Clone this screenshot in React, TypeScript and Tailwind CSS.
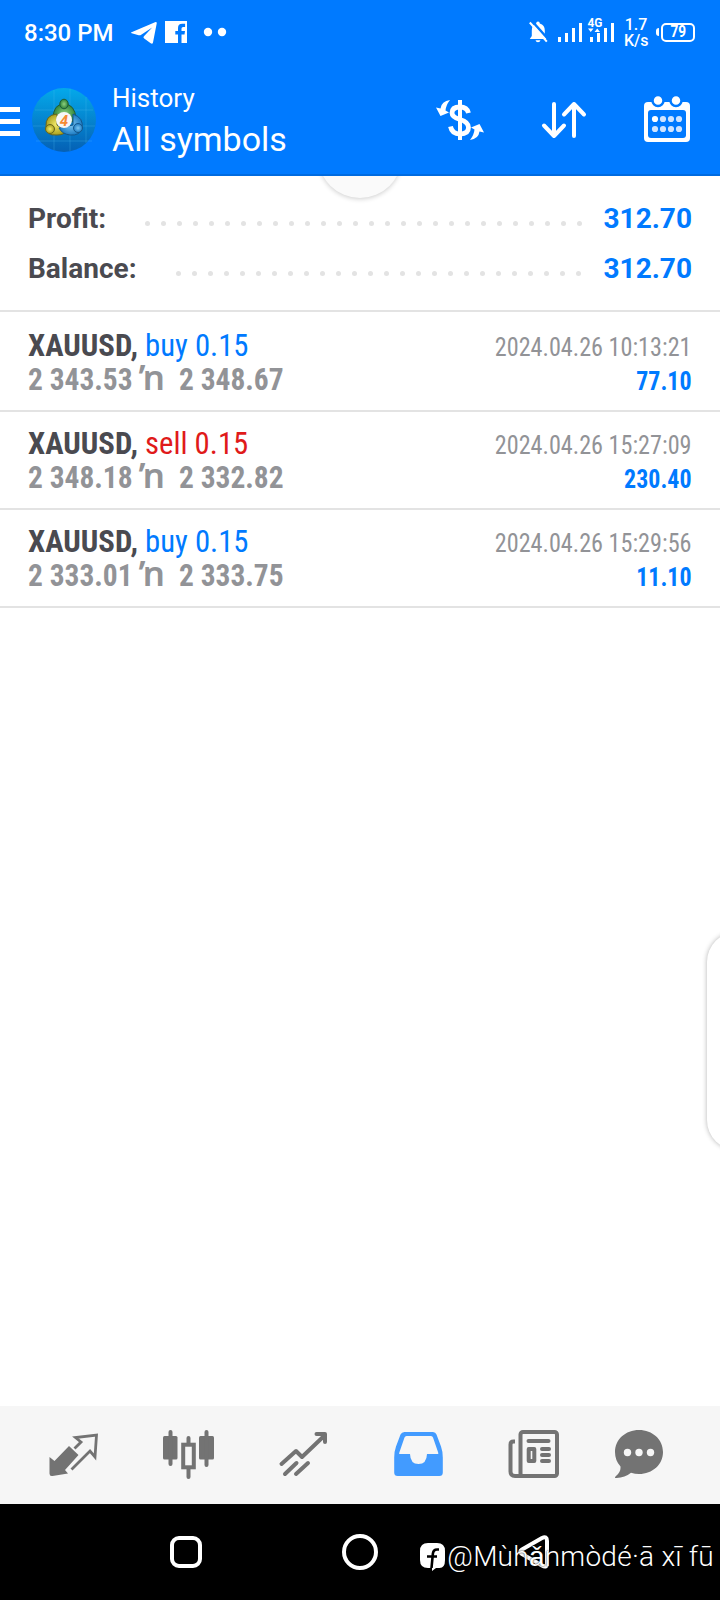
interface Deal {
  symbol: string;
  side: 'buy' | 'sell';
  volume: string;
  open: string;
  close: string;
  time: string;
  profit: string;
}

const deals: Deal[] = [
  { symbol: 'XAUUSD', side: 'buy', volume: '0.15', open: '2 343.53', close: '2 348.67', time: '2024.04.26 10:13:21', profit: '77.10' },
  { symbol: 'XAUUSD', side: 'sell', volume: '0.15', open: '2 348.18', close: '2 332.82', time: '2024.04.26 15:27:09', profit: '230.40' },
  { symbol: 'XAUUSD', side: 'buy', volume: '0.15', open: '2 333.01', close: '2 333.75', time: '2024.04.26 15:29:56', profit: '11.10' },
];

function StatusBar() {
  return (
    <div className="flex h-16 items-center justify-between pl-6 pr-[25px] text-white">
      <div className="flex items-center">
        <span className="w-[107px] pt-px text-2xl font-medium whitespace-nowrap">8:30 PM</span>
        <svg width="96" height="24" viewBox="131 20 96 24" fill="white">
          <path d="M131.5 32.3 155 22.2q2-.8 1.7 1.3L153 42.5q-.5 2-2.300.800l-6.500-4.800q-1.500-1.200 0-2.500l8-8.500-11 7.300q-1.200.8-2.500.4l-7-2q-1.300-.5-.2-.9z" />
          <path d="M165 21h22v22h-5.500v-8.500h3l.5-3.600h-3.500v-2.400q0-1.500 1.600-1.500h2v-3.200h-2.900q-4.200 0-4.200 4.200v2.900h-2.700v3.600h2.700V43H165z" />
          <circle cx="208" cy="32" r="4.200" />
          <circle cx="222" cy="32" r="4.200" />
        </svg>
      </div>
      <div className="flex items-center">
        <svg width="88" height="32" viewBox="528 16 88 32" fill="white">
          <path d="M538 21.500q1.800 0 1.800 2 5 1.500 5 7v5.500l2 3h-17l2-3v-5.500q0-5.500 4.400-7 0-2 1.800-2zM535.500 40.200h5q-.5 2-2.500 2t-2.500-2z" />
          <path d="M531.500 20.500l17 19" stroke="#007aff" strokeWidth="2.500" />
          <path d="M529.800 22.500l17 19.200" stroke="white" strokeWidth="2" />
          <path d="M558 37h3v5h-3zM565 33h3v9h-3zM572 28h3v14h-3zM579 23h3v19h-3z" />
          <path d="M590 37h3v5h-3zM597 33h3v9h-3zM604 28h3v14h-3zM611 23h3v19h-3z" />
          <path d="M588 28.500h5.500l-2.750 3.500zM594.500 32h5.500l-2.750-3.500z" />
          <text x="587.500" y="27" textLength="15" lengthAdjust="spacingAndGlyphs" className="font-[Roboto] text-[12px] font-bold">4G</text>
        </svg>
        <div className="ml-2 w-6 pt-0.5 text-center text-base/4 font-medium">
          <div className="whitespace-nowrap">1.7</div>
          <div className="whitespace-nowrap">K/s</div>
        </div>
        <div className="ml-2 h-2 w-[3px] rounded-l-sm bg-white" />
        <div className="ml-0.5 flex h-[19px] w-[34px] items-center justify-center rounded-[5px] border-2 border-white text-base/4 font-bold">
          <span className="scale-x-85">79</span>
        </div>
      </div>
    </div>
  );
}

function AppLogo() {
  return (
    <svg width="64" height="64" viewBox="0 0 64 64" className="ml-3">
      <defs>
        <linearGradient id="disc" x1="0" y1="0" x2="0" y2="1">
          <stop offset="0" stopColor="#04a9ea" />
          <stop offset="1" stopColor="#0560b4" />
        </linearGradient>
        <radialGradient id="green"><stop stopColor="#8fd07f" /><stop offset="1" stopColor="#2b8137" /></radialGradient>
        <radialGradient id="yellow"><stop stopColor="#f3ea6b" /><stop offset="1" stopColor="#a9a01d" /></radialGradient>
        <radialGradient id="blue"><stop stopColor="#7cc6f1" /><stop offset="1" stopColor="#1d7cc4" /></radialGradient>
      </defs>
      <circle cx="32" cy="32" r="32" fill="url(#disc)" />
      <path d="M22 2v60M38 1v62M54 9v46M3 22h58M1 38h62M4 53h56" stroke="#4fb9ee" strokeOpacity=".28" />
      <path d="M21 31q0-15 11-15t12 15l-4 3H25z" fill="url(#green)" stroke="#1e5c3a" />
      <path d="M25 26q-12 1-11 13 0 9 11 8 7 0 9-4l-9-6z" fill="url(#yellow)" stroke="#67641c" />
      <path d="M41 26q11 4 9 14-2 8-12 7-8-1-11-7l14-3z" fill="url(#blue)" stroke="#14578c" />
      <ellipse cx="32" cy="16" rx="4.200" ry="4.800" fill="url(#green)" stroke="#1e5c3a" />
      <circle cx="18" cy="41" r="4.500" fill="url(#yellow)" stroke="#67641c" />
      <circle cx="46" cy="40" r="4.500" fill="url(#blue)" stroke="#14578c" />
      <circle cx="32" cy="32" r="8" fill="#f7f7f7" />
      <text x="32" y="37.500" textAnchor="middle" fill="#f58a33" className="font-[Roboto] text-[15px] font-bold italic">4</text>
    </svg>
  );
}

function Header() {
  return (
    <div className="flex h-28 items-center border-b-2 border-[#006be0] pt-0.5 text-white">
      <div className="mt-[3px] flex w-5 flex-col gap-[7px]">
        <div className="h-[5px] bg-white" />
        <div className="h-[5px] bg-white" />
        <div className="h-[5px] bg-white" />
      </div>
      <AppLogo />
      <div className="ml-4 flex-1 pb-0.5 whitespace-nowrap">
        <div className="text-[26px]/[40px]">History</div>
        <div className="text-[34px]/[42px]">All symbols</div>
      </div>
      <svg width="256" height="48" viewBox="436 96 256 48" fill="none" stroke="white">
        {/* currency swap */}
        <path d="M460 100v40" strokeWidth="4" />
        <path d="M468.500 113q-1.500-6-8.500-6-8 0-8 6 0 4 8 6.500 8.500 2.500 8.500 8 0 6.500-8.500 6.500-8 0-9.500-7.500" strokeWidth="4.800" />
        <path d="M450 100q-8.500 1-9.500 8.500l-4.500-1 4.500 8.500 8.500-3.500-3.500-2q.5-5.500 4.500-10.500zM470 140q8.500-1 9.500-8.500l4.500 1-4.500-8.500-8.500 3.500 3.500 2q-.5 5.500-4.500 10.500z" fill="white" stroke="none" />
        {/* sort */}
        <path d="M554 104v32M544 125.500l10 10.500 10-10.500M574 136v-32M564 114.500l10-10.500 10 10.500" strokeWidth="4" strokeLinecap="round" strokeLinejoin="round" />
        {/* calendar */}
        <rect x="644" y="102" width="46" height="40" rx="4" fill="white" stroke="none" />
        <rect x="648" y="110" width="38" height="28" rx="3" fill="#007aff" stroke="none" />
        <circle cx="658" cy="100.500" r="5.500" fill="white" stroke="#007aff" strokeWidth="2.500" />
        <circle cx="676" cy="100.500" r="5.500" fill="white" stroke="#007aff" strokeWidth="2.500" />
        <g fill="#cfe4ff" stroke="none">
          <circle cx="655" cy="119" r="3.100" fill="white" />
          <circle cx="663" cy="119" r="3.100" />
          <circle cx="671" cy="119" r="3.100" />
          <circle cx="679" cy="119" r="3.100" />
          <circle cx="655" cy="129" r="3.100" />
          <circle cx="663" cy="129" r="3.100" />
          <circle cx="671" cy="129" r="3.100" />
          <circle cx="679" cy="129" r="3.100" />
        </g>
      </svg>
      <div className="w-7" />
    </div>
  );
}

function SummaryRow({ label, value, dots }: { label: string; value: string; dots: number }) {
  // the leader starts a fixed distance after the label
  return (
    <div className="flex h-[50px] items-center text-[28px] font-bold">
      <span className="text-[#4a4a50]">{label}</span>
      <div className="ml-[39px] flex flex-1 items-center gap-[11px] pt-[9px]">
        {Array.from({ length: dots }, (_, i) => (
          <span key={i} className="size-[5px] shrink-0 rounded-full bg-[#e3e3e3]" />
        ))}
      </div>
      <span className="text-right text-[#007aff]">{value}</span>
    </div>
  );
}

function DealRow({ deal }: { deal: Deal }) {
  return (
    <div className="flex h-[98px] justify-between border-b-2 border-[#e3e3e3] px-7 pt-3.5 font-['Roboto_Condensed',Roboto,sans-serif] font-stretch-condensed">
      <div className="text-[32px]/[34px] font-bold whitespace-nowrap text-[#929397]">
        <div className="origin-left scale-x-96 text-[#4a4a50]">
          {deal.symbol},{' '}
          <span className={deal.side === 'buy' ? 'font-normal text-[#007aff]' : 'font-normal text-[#e01a1a]'}>
            {deal.side} {deal.volume}
          </span>
        </div>
        <div className="flex">
          <span className="w-[111px] origin-left scale-x-92">{deal.open}</span>
          <span className="w-10 font-['Noto_Sans'] text-[35px]/[29px] font-semibold font-stretch-normal">ŉ</span>
          <span className="origin-left scale-x-92">{deal.close}</span>
        </div>
      </div>
      <div className="pt-0.5 text-right text-[26px]/[34px]">
        <div className="origin-right scale-x-93 text-[#929397]">{deal.time}</div>
        <div className="origin-right scale-x-92 font-bold text-[#007aff]">{deal.profit}</div>
      </div>
    </div>
  );
}

function TabBar() {
  return (
    <div className="flex h-[98px] items-center bg-[#f6f6f6] pl-[46px] text-[#737373]">
      <svg width="56" height="56" viewBox="46 1427 56 56" fill="none" className="mr-[59px]">
        <path d="M49.500 1457l5 4 14.500-15 9.500 9-13.500 15 3 3.500-15.500 2.500q-3 .5-3-2.500z" fill="currentColor" />
        <path d="M74.500 1448.500l6.500-6.500-5.500-4.500 21-2.500-1.500 22-5-6-18.500 18.500" stroke="currentColor" strokeWidth="2.800" />
      </svg>
      <svg width="56" height="56" viewBox="161 1427 56 56" fill="currentColor" className="mr-[59px]">
        <rect x="163" y="1436" width="14.500" height="23.500" rx="1.500" />
        <rect x="199" y="1436" width="15" height="23.500" rx="1.500" />
        <path d="M170.500 1432v32M206.500 1432v33M188.500 1438v6M188.500 1468v9" stroke="currentColor" strokeWidth="4" strokeLinecap="round" />
        <rect x="183.200" y="1444.700" width="10.600" height="22.600" fill="none" stroke="currentColor" strokeWidth="4" />
      </svg>
      <svg width="56" height="56" viewBox="276 1427 56 56" fill="none" stroke="currentColor" strokeWidth="4" strokeLinecap="round" strokeLinejoin="round" className="mr-[59px]">
        <path d="M281.500 1464l14.500-13 6 6 22-21M316.500 1434h8.500v8M285 1474l11.500-11M296 1474l12-11" />
      </svg>
      <svg width="56" height="56" viewBox="391 1427 56 56" className="mr-[59px]">
        <path fill="#429bff" fillRule="evenodd" d="M405 1432h28q2.500 0 3.500 2.500l4.500 12q1.800 5 1.800 11v15q0 3.500-3.500 3.500h-41.600q-3.500 0-3.500-3.500v-15q0-6 1.800-11l4.500-12q1.200-2.500 4-2.500zM406.500 1436q-1.500 0-2 1.500l-5 14.500q-.8 2-.1 2h10.600q.3 10 8.500 10t8.500-10h11q.8 0 0-2l-5-14.500q-.5-1.500-2-1.500z" />
      </svg>
      <svg width="56" height="56" viewBox="506 1427 56 56" fill="none" stroke="currentColor" strokeWidth="4" strokeLinecap="round" className="mr-[49px]">
        <rect x="520.500" y="1432" width="36.500" height="44" rx="2.500" />
        <path d="M515 1441.500h-1.500q-3 0-3 3v27q0 4.500 4.500 4.500h8" strokeLinecap="butt" />
        <path d="M528.500 1441h20M542 1449h7M542 1455h7M542 1461h7" />
        <rect x="528.700" y="1449" width="5.600" height="12" strokeLinejoin="round" />
      </svg>
      <svg width="56" height="56" viewBox="611 1427 56 56">
        <path fill="currentColor" d="M639 1430c13.500 0 24 9.500 24 22s-10.500 22-24 22q-4 0-8-1.200-6 5-14.500 5.200-2.500 0-1-1.500 5-4 5-8.500v-1.500q-5.500-6-5.500-14.500c0-12.500 10.500-22 24-22z" />
        <g fill="#f6f6f6">
          <circle cx="627.500" cy="1452.500" r="3.700" />
          <circle cx="639" cy="1452.500" r="3.700" />
          <circle cx="650.500" cy="1452.500" r="3.700" />
        </g>
      </svg>
    </div>
  );
}

function NavBar() {
  return (
    <div className="relative flex h-24 items-center bg-black pl-[170px]">
      <div className="size-8 rounded-[9px] border-4 border-white" />
      <div className="ml-[140px] size-9 rounded-full border-4 border-white" />
      <svg width="34" height="36" viewBox="518 1534 34 36" className="ml-[140px]" fill="none" stroke="white" strokeWidth="4" strokeLinejoin="round">
        <path d="M522 1549.500l20-11.500q5-2.500 5 3v22q0 5.500-5 2.500l-20-11.500q-3.500-2.300 0-4.500z" />
      </svg>
      {/* author watermark lies over the system buttons */}
      <div className="absolute top-[37px] right-1.5 flex items-center text-[28px]/8 font-light tracking-[0.25px] whitespace-nowrap text-white [text-shadow:0_0_2px_black]">
        <svg width="25" height="28" viewBox="0 0 25 28" className="mr-0.5">
          <path fill="white" d="M8 0h9q8 0 8 8v9q0 8-5.500 8H16l-4 3v-3H8q-8 0-8-8V8q0-8 8-8z" />
          <path d="M19 6.500h-2q-3.500 0-4.100 4L11.500 25M7 13.500h10" fill="none" stroke="black" strokeWidth="2.600" />
        </svg>
        @Mùhǎnmòdé·ā xī fū
      </div>
    </div>
  );
}

export default function App() {
  return (
    <div className="relative flex h-[1600px] w-[720px] flex-col overflow-hidden bg-white font-[Roboto,sans-serif]">
      <div className="bg-[#007aff]">
        <StatusBar />
        <Header />
      </div>
      <div className="relative flex flex-1 flex-col overflow-hidden">
        {/* pull-to-refresh bubble, tucked under the header */}
        <div className="absolute -top-[62px] left-[318px] size-21 rounded-full bg-[#fafafa] shadow-[0_1px_5px_rgba(0,0,0,0.2)]" />
        <div className="relative h-[136px] border-b-2 border-[#e3e3e3] px-7 pt-[18px]">
          <SummaryRow label="Profit:" value="312.70" dots={28} />
          <SummaryRow label="Balance:" value="312.70" dots={26} />
        </div>
        <div className="pt-0.5">
          {deals.map(deal => (
            <DealRow key={deal.time} deal={deal} />
          ))}
        </div>
        {/* edge panel handle */}
        <div className="absolute top-[756px] left-[707px] h-[218px] w-20 rounded-[30px] bg-white shadow-[0_0_5px_rgba(0,0,0,0.3)]" />
      </div>
      <TabBar />
      <NavBar />
    </div>
  );
}
